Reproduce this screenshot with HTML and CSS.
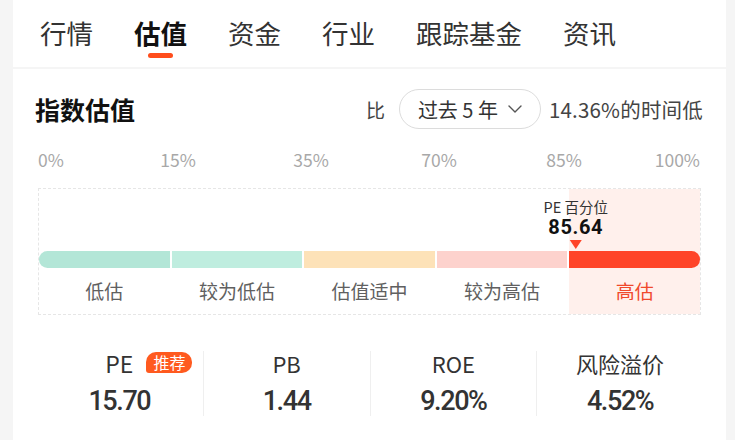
FILE: index.html
```html
<!DOCTYPE html>
<html lang="zh-CN">
<head>
<meta charset="utf-8">
<title>指数估值</title>
<link rel="stylesheet" href="styles.css">
</head>
<body>
<div class="page">
  <nav class="tabs">
    <div class="tab">行情</div>
    <div class="tab active">估值</div>
    <div class="tab">资金</div>
    <div class="tab">行业</div>
    <div class="tab">跟踪基金</div>
    <div class="tab">资讯</div>
  </nav>
  <section class="card">
    <div class="head">
      <h2 class="title">指数估值</h2>
      <div class="head-right">
        <span class="cmp">比</span>
        <button class="pill">过去 5 年
          <svg class="chev" width="14" height="8" viewBox="0 0 14 8"><polyline points="1,1 7,7 13,1" fill="none" stroke="#555" stroke-width="1.4" stroke-linecap="round" stroke-linejoin="round"/></svg>
        </button>
        <span class="low">14.36%的时间低</span>
      </div>
    </div>
    <div class="scale">
      <span class="s-first">0%</span>
      <span>15%</span>
      <span>35%</span>
      <span>70%</span>
      <span>85%</span>
      <span class="s-last">100%</span>
    </div>
    <div class="chart">
      <div class="zone">
        <div class="seg seg1"></div>
        <div class="zlabel">低估</div>
      </div>
      <div class="zone">
        <div class="seg seg2"></div>
        <div class="zlabel">较为低估</div>
      </div>
      <div class="zone">
        <div class="seg seg3"></div>
        <div class="zlabel">估值适中</div>
      </div>
      <div class="zone">
        <div class="seg seg4"></div>
        <div class="zlabel">较为高估</div>
      </div>
      <div class="zone zone-hot">
        <div class="seg seg5"></div>
        <div class="zlabel hot">高估</div>
      </div>
      <div class="marker" style="left: 81.2%">
        <div class="m-label">PE 百分位</div>
        <div class="m-value">85.64</div>
        <div class="m-tri"></div>
      </div>
    </div>
    <div class="stats">
      <div class="stat">
        <div class="st-label"><span class="pe">PE<span class="badge">推荐</span></span></div>
        <div class="st-value">15.70</div>
      </div>
      <div class="stat">
        <div class="st-label">PB</div>
        <div class="st-value">1.44</div>
      </div>
      <div class="stat">
        <div class="st-label">ROE</div>
        <div class="st-value">9.20%</div>
      </div>
      <div class="stat">
        <div class="st-label">风险溢价</div>
        <div class="st-value">4.52%</div>
      </div>
    </div>
  </section>
</div>
</body>
</html>
```
FILE: styles.css
```css
* { box-sizing: border-box; }
html, body { margin: 0; padding: 0; }
body {
  background: #f5f5f5;
  font-family: "Noto Sans CJK SC", "Noto Sans", sans-serif;
  color: #333;
  width: 735px;
  height: 440px;
  overflow: hidden;
}
.page {
  margin: 0 9px 0 13px;
  display: flex;
  flex-direction: column;
  gap: 2px;
}
.tabs {
  background: #fff;
  height: 67px;
  display: flex;
  align-items: flex-start;
  gap: 41px;
  padding: 20px 0 0 27px;
}
.tab {
  font-size: 26.5px;
  line-height: 26px;
  color: #333;
  display: flex;
  flex-direction: column;
  align-items: center;
}
.tab.active { font-weight: 700; color: #111; }
.tab.active::after {
  content: "";
  width: 25px;
  height: 5px;
  border-radius: 3px;
  background: #ff4d1c;
  margin-top: 7px;
}
.card {
  background: #fff;
  padding: 20px 25px 0 25px;
  height: 371px;
}
.head {
  display: flex;
  align-items: center;
  justify-content: space-between;
  height: 40px;
  margin-right: -2px;
}
.title {
  margin: 0 0 0 -3px;
  font-size: 25px;
  font-weight: 700;
  color: #111;
  line-height: 30px;
}
.head-right {
  display: flex;
  align-items: center;
  font-size: 19px;
  color: #444;
}
.cmp { margin-right: 14px; }
.pill {
  height: 40px;
  width: 142px;
  border: 1px solid #dcdcdc;
  border-radius: 20px;
  background: #fff;
  font-family: inherit;
  font-size: 20px;
  color: #333;
  display: flex;
  align-items: center;
  justify-content: center;
  gap: 10px;
  padding: 0;
  margin-right: 8px;
}
.low { font-size: 20.5px; letter-spacing: 0.2px; }
.scale {
  margin-top: 21px;
  display: grid;
  grid-template-columns: 82px 116px 150px 106px 144px 64px;
  font-size: 17.5px;
  line-height: 20px;
  color: #a8a8a8;
  text-align: center;
}
.scale .s-first { text-align: left; }
.scale .s-last { text-align: right; }
.chart {
  position: relative;
  margin-top: 18px;
  border: 1px dashed #e6e6e6;
  height: 127px;
  display: grid;
  grid-template-columns: repeat(5, 1fr);
  column-gap: 2px;
}
.zone {
  display: flex;
  flex-direction: column;
  padding-top: 62px;
}
.zone-hot { background: #fff0ec; }
.seg { height: 17px; }
.seg1 { background: #b3e6d7; border-radius: 9px 0 0 9px; }
.seg2 { background: #bfeddf; }
.seg3 { background: #fde2b8; }
.seg4 { background: #fdd2cd; }
.seg5 { background: #ff4428; border-radius: 0 9px 9px 0; }
.zlabel {
  flex: 1;
  display: flex;
  align-items: center;
  justify-content: center;
  font-size: 19px;
  color: #606060;
  padding-bottom: 2px;
}
.zlabel.hot { color: #f0492c; }
.marker {
  position: absolute;
  top: 9px;
  transform: translateX(-50%);
  display: flex;
  flex-direction: column;
  align-items: center;
}
.m-label { font-size: 14.5px; line-height: 18px; color: #333; }
.m-value {
  font-family: Roboto, "Noto Sans", sans-serif;
  font-size: 20px;
  font-weight: 700;
  line-height: 22px;
  color: #111;
  letter-spacing: 0.6px;
}
.m-tri {
  margin-top: 2px;
  width: 0;
  height: 0;
  border-left: 6px solid transparent;
  border-right: 6px solid transparent;
  border-top: 9px solid #ff4428;
}
.stats {
  margin-top: 36px;
  margin-left: -2px;
  margin-right: -2px;
  display: grid;
  grid-template-columns: repeat(4, 1fr);
}
.stat {
  height: 65px;
  display: flex;
  flex-direction: column;
  align-items: center;
}
.stat + .stat { border-left: 1px solid #efefef; }
.st-label {
  height: 24px;
  font-size: 22px;
  line-height: 24px;
  color: #333;
  display: flex;
  align-items: center;
}
.pe { position: relative; font-size: 23px; }
.badge {
  position: absolute;
  left: calc(100% + 13px);
  top: 1px;
  font-size: 16px;
  line-height: 21px;
  height: 21px;
  width: 46px;
  text-align: center;
  background: #ff5a1f;
  color: #fff;
  border-radius: 10px 10px 10px 3px;
  white-space: nowrap;
}
.st-value {
  margin-top: 11px;
  font-family: Roboto, "Noto Sans", sans-serif;
  font-size: 27px;
  font-weight: 500;
  line-height: 30px;
  letter-spacing: -1.4px;
  color: #333;
}
```
